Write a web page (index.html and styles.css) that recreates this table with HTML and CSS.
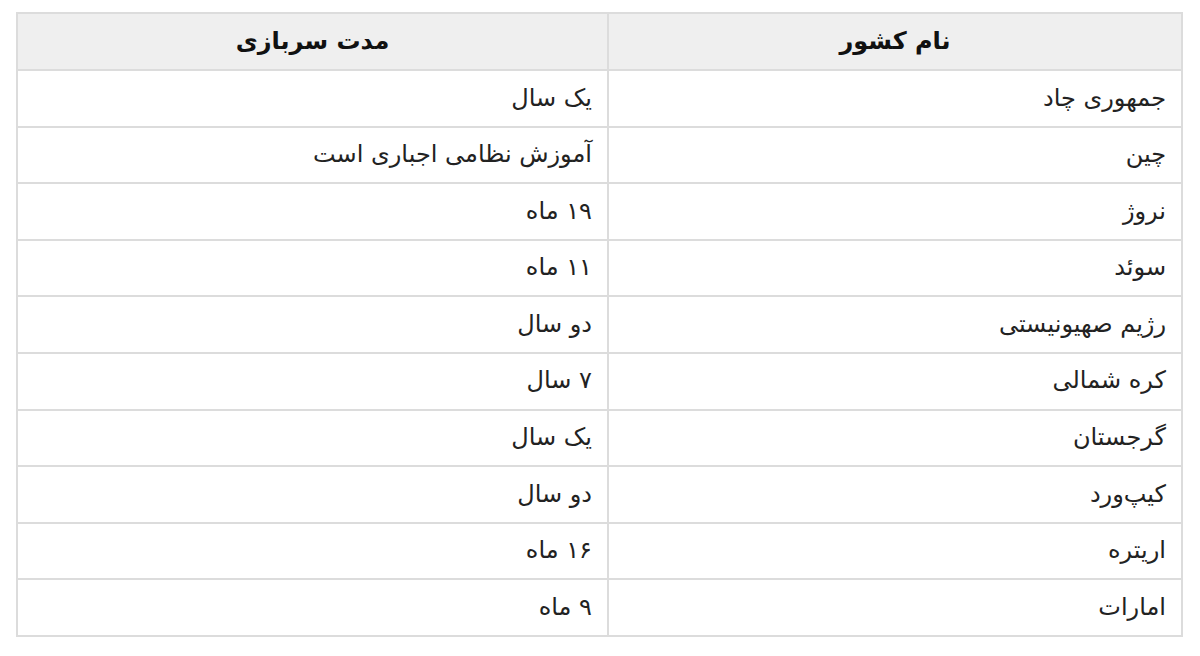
FILE: index.html
```html
<!DOCTYPE html>
<html lang="fa" dir="rtl">
<head>
<meta charset="utf-8">
<link rel="stylesheet" href="styles.css">
</head>
<body>
<div class="wrap">
<table class="data">
<colgroup><col class="c-country"><col class="c-duration"></colgroup>
<thead>
<tr><th>نام کشور</th><th>مدت سربازی</th></tr>
</thead>
<tbody>
<tr><td>جمهوری چاد</td><td>یک سال</td></tr>
<tr><td>چین</td><td>آموزش نظامی اجباری است</td></tr>
<tr><td>نروژ</td><td>۱۹ ماه</td></tr>
<tr><td>سوئد</td><td>۱۱ ماه</td></tr>
<tr><td>رژیم صهیونیستی</td><td>دو سال</td></tr>
<tr><td>کره شمالی</td><td>۷ سال</td></tr>
<tr><td>گرجستان</td><td>یک سال</td></tr>
<tr><td>کیپ‌ورد</td><td>دو سال</td></tr>
<tr><td>اریتره</td><td>۱۶ ماه</td></tr>
<tr><td>امارات</td><td>۹ ماه</td></tr>
</tbody>
</table>
</div>
</body>
</html>
```
FILE: styles.css
```css
html, body {
  margin: 0;
  padding: 0;
  background: #ffffff;
}
body {
  font-family: "DejaVu Sans", "Noto Sans", sans-serif;
  color: #222;
}
.wrap {
  padding: 12px 17px 0 18px;
}
.data {
  width: 1165px;
  border-collapse: collapse;
  table-layout: fixed;
  border: 2px solid #dcdcdc;
}
.c-country { width: 574px; }
.c-duration { width: 591px; }
.data th, .data td {
  border: 2px solid #dcdcdc;
  height: 54.6px;
  padding: 0 15px;
  font-size: 24px;
  line-height: 1.15;
}
.data th {
  background: #efefef;
  font-weight: bold;
  text-align: center;
  height: 55px;
  color: #111;
}
.data td {
  text-align: right;
}
```
